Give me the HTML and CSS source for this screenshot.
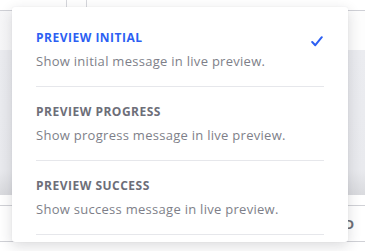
FILE: index.html
```html
<!DOCTYPE html>
<html>
<head>
<meta charset="utf-8">
<link rel="stylesheet" href="styles.css">
</head>
<body>
<div class="page">
  <div class="topstrip">
    <div class="tab-a"></div>
    <div class="tab-b"></div>
  </div>
  <div class="toolbar"></div>
  <div class="canvas"></div>
  <div class="bottom">
    <div class="row"><span class="row-label">D</span></div>
  </div>

  <div class="menu">
    <div class="item">
      <div class="text">
        <div class="title active">PREVIEW INITIAL</div>
        <div class="desc">Show initial message in live preview.</div>
      </div>
      <svg class="check" width="12" height="11" viewBox="0 0 12 11"><polyline points="1.2,6 4.3,9.2 10.8,1.2" fill="none" stroke="#2c5ff3" stroke-width="2" stroke-linecap="round" stroke-linejoin="round"/></svg>
    </div>
    <div class="item">
      <div class="text">
        <div class="title">PREVIEW PROGRESS</div>
        <div class="desc">Show progress message in live preview.</div>
      </div>
    </div>
    <div class="item">
      <div class="text">
        <div class="title">PREVIEW SUCCESS</div>
        <div class="desc">Show success message in live preview.</div>
      </div>
    </div>
  </div>
</div>
</body>
</html>
```
FILE: styles.css
```css
html, body {
  margin: 0;
  padding: 0;
}
body {
  font-family: "Open Sans", "Noto Sans", sans-serif;
  background: #ffffff;
}
.page {
  position: relative;
  width: 365px;
  height: 251px;
  overflow: hidden;
}
.topstrip {
  border-bottom: 1px solid #cfd0d6;
  display: flex;
  box-sizing: border-box;
  height: 11px;
}
.tab-a {
  margin-left: 66px;
  width: 19px;
  border-left: 1px solid #d6d7dc;
  border-right: 1px solid #d6d7dc;
}
.toolbar {
  height: 39px;
  background: linear-gradient(to right, #f6f6f8, #fdfdfd 40px);
}
.canvas {
  height: 145px;
  background: linear-gradient(to bottom, #ebecf0 0, #e9eaee 120px, #d9dade 145px);
}
.bottom {
  height: 56px;
  background: #ffffff;
  padding-top: 10px;
  box-sizing: border-box;
}
.row {
  height: 35px;
  border-top: 1px solid #d0d1d6;
  border-bottom: 1px solid #d0d1d6;
  display: flex;
  align-items: center;
  justify-content: flex-end;
}
.row-label {
  font-size: 13px;
  font-weight: 700;
  color: #6e6f78;
  margin-right: 10px;
  letter-spacing: 1px;
}
.menu {
  position: absolute;
  left: 12px;
  top: 7px;
  width: 336px;
  height: 235px;
  box-sizing: border-box;
  background: #ffffff;
  border-radius: 3px;
  box-shadow: 0 4px 14px rgba(30, 32, 45, 0.16), 0 0 2px rgba(30, 32, 45, 0.06);
  padding: 6px 24px 0;
}
.item {
  height: 74px;
  box-sizing: border-box;
  border-bottom: 1px solid #e6e7eb;
  padding-top: 17px;
  display: flex;
  justify-content: space-between;
  align-items: flex-start;
}
.title {
  font-size: 12px;
  line-height: 16px;
  font-weight: 700;
  letter-spacing: 0.5px;
  color: #6d6e78;
}
.title.active {
  color: #2c5ff3;
}
.desc {
  margin-top: 6px;
  font-size: 13px;
  line-height: 18px;
  letter-spacing: 0.28px;
  color: #7e7f89;
}
.check {
  margin-top: 6px;
  margin-right: 1px;
}
```
